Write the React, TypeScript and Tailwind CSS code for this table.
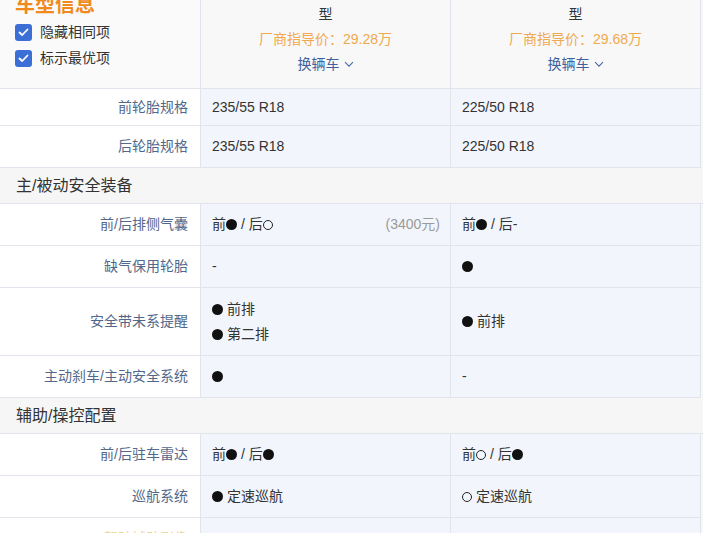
import React from "react";

const FONT = { fontFamily: '"Liberation Sans","Noto Sans CJK SC",sans-serif' };

const Dot = () => (
  <span className="inline-block w-[11px] h-[11px] rounded-full bg-[#111] align-[-1px]" />
);
const Ring = () => (
  <span className="inline-block w-[10px] h-[10px] rounded-full border border-[#222] align-[-1px]" />
);

const Check = () => (
  <span className="w-[17px] h-[17px] rounded-[3px] bg-[#3b6fd6] flex items-center justify-center">
    <svg width="11" height="9" viewBox="0 0 11 9" fill="none">
      <path d="M1.5 4.5 L4.2 7 L9.5 1.5" stroke="white" strokeWidth="1.8" strokeLinecap="round" strokeLinejoin="round" />
    </svg>
  </span>
);

const Chevron = () => (
  <svg width="10" height="7" viewBox="0 0 10 7" fill="none" className="ml-[4px]">
    <path d="M1 1.2 L5 5.2 L9 1.2" stroke="#4a6aa8" strokeWidth="1.1" />
  </svg>
);

function Row({
  label,
  a,
  b,
  h = "h-[42px]",
}: {
  label: React.ReactNode;
  a: React.ReactNode;
  b: React.ReactNode;
  h?: string;
}) {
  return (
    <div className={`flex ${h} border-b border-[#e1e4ea] w-[701px] border-r`}>
      <div className="w-[201px] shrink-0 bg-white border-r border-[#e1e4ea] flex items-center justify-end pr-[12px] text-[14px] text-[#52688a]">
        {label}
      </div>
      <div className="w-[250px] shrink-0 bg-[#f2f6fc] border-r border-[#e1e4ea] flex items-center pl-[11px] pr-[10px] text-[14px] text-[#333]">
        {a}
      </div>
      <div className="flex-1 bg-[#f2f6fc] flex items-center pl-[11px] text-[14px] text-[#333]">
        {b}
      </div>
    </div>
  );
}

function Section({ title }: { title: string }) {
  return (
    <div className="h-[36px] bg-[#f6f6f6] border-b border-[#e1e4ea] flex items-center pl-[16px] text-[16px] text-[#333]">
      {title}
    </div>
  );
}

function ColHead({ price }: { price: string }) {
  return (
    <div className="flex flex-col items-center text-[14px] leading-[25px]">
      <div className="text-[#333] whitespace-nowrap">2023款 2.0T 四驱旗舰版 七座车</div>
      <div className="text-[#333]">型</div>
      <div className="text-[#f0a94e]">厂商指导价：{price}</div>
      <div className="text-[#3f5f9e] flex items-center">
        换辆车
        <Chevron />
      </div>
    </div>
  );
}

export default function App() {
  return (
    <div className="w-[703px] h-[533px] overflow-hidden bg-[#f7f7f7]" style={FONT}>
      <div className="mt-[-33px]">
        {/* header */}
        <div className="flex h-[122px] border-b border-[#e1e4ea] w-[701px] border-r">
          <div className="w-[201px] shrink-0 bg-[#fafafa] border-r border-[#e1e4ea] pt-[24px] pl-[15px]">
            <div className="text-[20px] leading-[28px] font-bold text-[#f08a1c]">车型信息</div>
            <div className="h-[26px] flex items-center gap-[8px] text-[14px] text-[#333]">
              <Check />
              隐藏相同项
            </div>
            <div className="h-[26px] flex items-center gap-[8px] text-[14px] text-[#333]">
              <Check />
              标示最优项
            </div>
          </div>
          <div className="w-[250px] shrink-0 bg-[#f8f8f9] border-r border-[#e1e4ea] pt-[10px] overflow-hidden">
            <ColHead price="29.28万" />
          </div>
          <div className="flex-1 bg-[#f8f8f9] pt-[10px] overflow-hidden">
            <ColHead price="29.68万" />
          </div>
        </div>

        <Row label="前轮胎规格" a="235/55 R18" b="225/50 R18" h="h-[37px]" />
        <Row label="后轮胎规格" a="235/55 R18" b="225/50 R18" />
        <Section title="主/被动安全装备" />
        <Row
          label="前/后排侧气囊"
          a={
            <div className="flex w-full items-center">
              <span>
                前<Dot /> / 后<Ring />
              </span>
              <span className="ml-auto text-[#9a9a9a]">(3400元)</span>
            </div>
          }
          b={
            <span>
              前<Dot /> / 后-
            </span>
          }
        />
        <Row label="缺气保用轮胎" a="-" b={<Dot />} />
        <Row
          label="安全带未系提醒"
          h="h-[68px]"
          a={
            <div className="flex flex-col leading-[25px]">
              <span>
                <Dot /> 前排
              </span>
              <span>
                <Dot /> 第二排
              </span>
            </div>
          }
          b={
            <span>
              <Dot /> 前排
            </span>
          }
        />
        <Row label="主动刹车/主动安全系统" a={<Dot />} b="-" />
        <Section title="辅助/操控配置" />
        <Row
          label="前/后驻车雷达"
          a={
            <span>
              前<Dot /> / 后<Dot />
            </span>
          }
          b={
            <span>
              前<Ring /> / 后<Dot />
            </span>
          }
        />
        <Row
          label="巡航系统"
          a={
            <span>
              <Dot /> 定速巡航
            </span>
          }
          b={
            <span>
              <Ring /> 定速巡航
            </span>
          }
        />
        <Row label={<span className="text-[#ecd48a]">驾驶辅助影像</span>} a="-" b="-" />
      </div>
    </div>
  );
}
